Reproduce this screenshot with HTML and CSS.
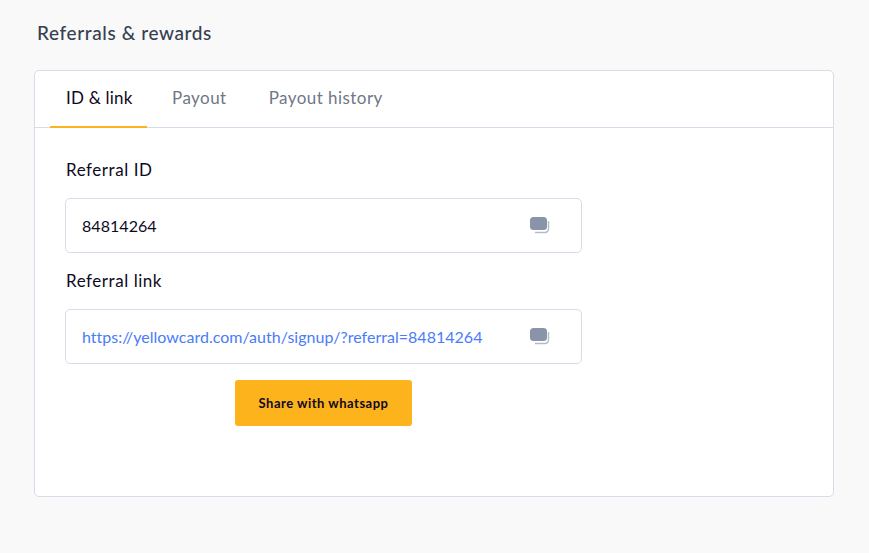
FILE: index.html
```html
<!DOCTYPE html>
<html lang="en">
<head>
  <meta charset="UTF-8">
  <meta name="viewport" content="width=device-width, initial-scale=1.0">
  <title>Referrals &amp; rewards</title>
  <link rel="stylesheet" href="styles.css">
</head>
<body>

  <h1>Referrals &amp; rewards</h1>

  <div class="card">
    <div class="tabs">
      <a class="tab active">ID &amp; link</a>
      <a class="tab">Payout</a>
      <a class="tab">Payout history</a>
    </div>

    <div class="panel">
      <div class="field-label">Referral ID</div>
      <div class="field">
        <span class="field-value">84814264</span>
        <svg class="copy-icon" width="20" height="18" viewBox="0 0 20 18">
          <path d="M18.5 4v8a3.5 3.5 0 0 1-3.5 3.5H5" fill="none" stroke="#b4bbc8" stroke-width="1.4"/>
          <rect x="0" y="0" width="17" height="13" rx="3.5" fill="#8a94a8"/>
        </svg>
      </div>

      <div class="field-label">Referral link</div>
      <div class="field">
        <span class="field-value link">https://yellowcard.com/auth/signup/?referral=84814264</span>
        <svg class="copy-icon" width="20" height="18" viewBox="0 0 20 18">
          <path d="M18.5 4v8a3.5 3.5 0 0 1-3.5 3.5H5" fill="none" stroke="#b4bbc8" stroke-width="1.4"/>
          <rect x="0" y="0" width="17" height="13" rx="3.5" fill="#8a94a8"/>
        </svg>
      </div>

      <div class="share-row">
        <button class="share">Share with whatsapp</button>
      </div>
    </div>
  </div>

</body>
</html>
```

FILE: styles.css
```css
body {
  margin: 0;
  padding: 22px 35px 0 34px;
  background-color: #f9f9fa;
  font-family: Lato, "Noto Sans", sans-serif;
  color: #0f0a1e;
}

h1 {
  margin: 0 0 26px 3px;
  font-size: 19px;
  line-height: 22px;
  font-weight: 500;
  letter-spacing: 0.6px;
  color: #36404f;
}

.card {
  height: 425px;
  background-color: #fff;
  border: 1px solid #d9dce8;
  border-radius: 5px;
}

.tabs {
  display: flex;
  gap: 10px;
  height: 56px;
  padding-left: 15px;
  border-bottom: 1px solid #d9dce8;
}

.tab {
  padding: 16px 16px 0;
  font-size: 17px;
  line-height: 22px;
  letter-spacing: 0.45px;
  white-space: nowrap;
  color: #6f7785;
}

.tab.active {
  width: 65px;
  margin-right: -1px;
  margin-bottom: -1px;
  letter-spacing: 0.2px;
  color: #0f0a1e;
  border-bottom: 2px solid #fdb31b;
}

.panel {
  width: 517px;
  padding: 31px 0 0 30px;
}

.field-label {
  padding-left: 1px;
  font-size: 17px;
  line-height: 22px;
  letter-spacing: 0.55px;
  margin-bottom: 17px;
}

.field {
  display: flex;
  align-items: center;
  justify-content: space-between;
  height: 53px;
  margin-bottom: 17px;
  padding: 0 31px 0 16px;
  background-color: #fff;
  border: 1px solid #d9dce8;
  border-radius: 5px;
}

.field-value {
  font-size: 16px;
  letter-spacing: 0.05px;
}

.link {
  letter-spacing: 0.02px;
  color: #4a7cf7;
}

.copy-icon {
  margin-top: 1px;
}

.share-row {
  display: flex;
  justify-content: center;
  margin-top: -1px;
}

.share {
  width: 177px;
  height: 46px;
  border: none;
  border-radius: 3px;
  background-color: #fdb31b;
  color: #0f0a1e;
  font-family: inherit;
  font-size: 13px;
  font-weight: 700;
  letter-spacing: 0.5px;
}
```
